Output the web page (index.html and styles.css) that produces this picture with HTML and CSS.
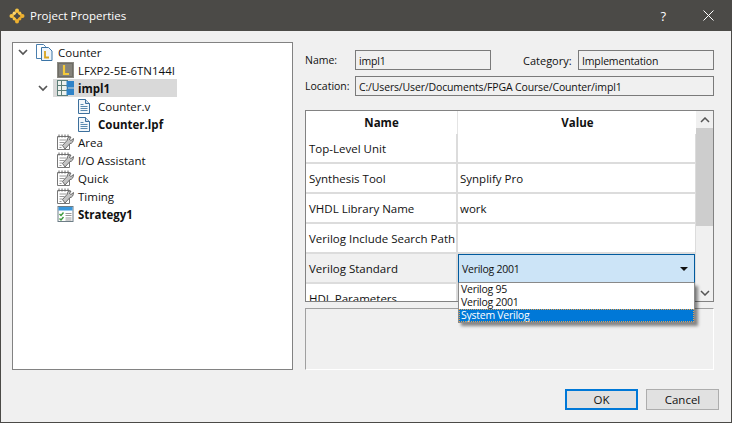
FILE: index.html

```html
<!DOCTYPE html>
<html lang="en">
<head>
  <meta charset="UTF-8" />
  <title>Project Properties</title>
  <link rel="stylesheet" href="styles.css">
</head>
<body>

  <svg class="defs" width="0" height="0">
    <symbol id="i-chev" viewBox="0 0 10 10"><path d="M1 3l4 4 4-4" fill="none" stroke="#555" stroke-width="1.7"/></symbol>
    <symbol id="i-project" viewBox="0 0 17 17">
      <path d="M0.500 0.500h7l2 2v12h-9z" fill="#fff" stroke="#4a7fae"/>
      <path d="M5.500 3.500h7l3.500 3.500v9.500h-10.500z" fill="#eef4fa" stroke="#3b74a6"/>
      <path d="M9 7v6.500h4" fill="none" stroke="#d9a520" stroke-width="1.800"/>
    </symbol>
    <symbol id="i-device" viewBox="0 0 17 16">
      <rect x="0.500" y="0.500" width="16" height="15" fill="#6f6d66" stroke="#8b8982"/>
      <rect x="2" y="2" width="13" height="12" fill="#85837b"/>
      <path d="M7 3v9h5" fill="none" stroke="#f3c93a" stroke-width="2.200"/>
    </symbol>
    <symbol id="i-impl" viewBox="0 0 17 16">
      <rect x="0.500" y="0.500" width="10" height="15" fill="#eef2ef" stroke="#5e7f78"/>
      <path d="M0.500 5.500h10M0.500 10.500h10M4.500 .5v15" stroke="#5e7f78" fill="none"/>
      <rect x="9.500" y="1" width="7.500" height="6.500" fill="#2f83c8"/>
      <rect x="9.500" y="8.500" width="7.500" height="6.500" fill="#2f83c8"/>
    </symbol>
    <symbol id="i-file" viewBox="0 0 12 15">
      <path d="M0.500 0.500h7l4 4v10h-11z" fill="#f2f7fb" stroke="#3c6f9c"/>
      <path d="M7.500 .5v4h4" fill="#c9dcec" stroke="#3c6f9c"/>
      <path d="M2.500 5.500h3M2.500 7.500h7M2.500 9.500h7M2.500 11.500h7" stroke="#5a8ab0" fill="none"/>
    </symbol>
    <symbol id="i-tool" viewBox="0 0 17 16">
      <path d="M0.500 2.500h12v13h-12z" fill="#fff" stroke="#777"/>
      <path d="M2 0.500v3M5 0.500v3M8 0.500v3M11 0.500v3" stroke="#666" fill="none"/>
      <path d="M2.500 6h7M2.500 8.500h5M2.500 11h3M2.500 13.500h2" stroke="#9a9a9a" fill="none"/>
      <path d="M16.500 4.500l-2.500 2-1.500-1 1.500-2.500c-2-.5-4 1-3.700 3.200L5.500 11.500l2.500 3.500 5-5.500c2 .2 3.500-2 3.500-5z" fill="#c4c4c4" stroke="#5f5f5f" stroke-width=".9"/>
    </symbol>
    <symbol id="i-strategy" viewBox="0 0 16 16">
      <rect x="0.500" y="0.500" width="15" height="15" fill="#fff" stroke="#6d7d86"/>
      <rect x="1" y="1" width="14" height="3.500" fill="#3a97dc"/>
      <path d="M2 8l1.500 1.500L6 6.500M2 12.500L3.500 14 6 11" fill="none" stroke="#3d9a3d" stroke-width="1.400"/>
      <path d="M8 7.500h6M8 9.500h6M8 12h6M8 14h6" stroke="#999" fill="none"/>
    </symbol>
  </svg>

  <div class="window">
    <div class="titlebar">
      <svg class="app-icon" viewBox="0 0 16 16" width="16" height="16">
        <path d="M8 3L13 8 8 13 3 8z" fill="none" stroke="#e8a92c" stroke-width="2"/>
        <circle cx="8" cy="2.500" r="2" fill="#f5c445"/>
        <circle cx="8" cy="13.500" r="2" fill="#eeb02f"/>
        <circle cx="2.500" cy="8" r="2" fill="#f5c445"/>
        <circle cx="13.500" cy="8" r="2" fill="#eeb02f"/>
        <circle cx="5.200" cy="5.200" r="1.600" fill="#fad675"/>
        <circle cx="10.800" cy="5.200" r="1.600" fill="#f5c445"/>
        <circle cx="5.200" cy="10.800" r="1.600" fill="#f5c445"/>
        <circle cx="10.800" cy="10.800" r="1.600" fill="#e8a92c"/>
      </svg>
      <span class="title">Project Properties</span>
      <span class="help">?</span>
      <svg class="close" viewBox="0 0 11 11" width="11" height="11"><path d="M.5 .5l10 10M10.500 .5l-10 10" stroke="#fff" fill="none"/></svg>
    </div>

    <div class="content">
      <div class="main">
        <div class="tree">
          <div class="node lv0"><svg class="chev"><use href="#i-chev"/></svg><svg class="ic-project"><use href="#i-project"/></svg><span>Counter</span></div>
          <div class="node lv1"><svg class="ic17"><use href="#i-device"/></svg><span>LFXP2-5E-6TN144I</span></div>
          <div class="node lv1 selected"><svg class="chev"><use href="#i-chev"/></svg><svg class="ic17"><use href="#i-impl"/></svg><span class="bold">impl1</span></div>
          <div class="node lv2"><svg class="ic12"><use href="#i-file"/></svg><span>Counter.v</span></div>
          <div class="node lv2"><svg class="ic12"><use href="#i-file"/></svg><span class="bold">Counter.lpf</span></div>
          <div class="node lv1"><svg class="ic17"><use href="#i-tool"/></svg><span>Area</span></div>
          <div class="node lv1"><svg class="ic17"><use href="#i-tool"/></svg><span>I/O Assistant</span></div>
          <div class="node lv1"><svg class="ic17"><use href="#i-tool"/></svg><span>Quick</span></div>
          <div class="node lv1"><svg class="ic17"><use href="#i-tool"/></svg><span>Timing</span></div>
          <div class="node lv1"><svg class="ic17"><use href="#i-strategy"/></svg><span class="bold">Strategy1</span></div>
        </div>

        <div class="side">
          <div class="field-row">
            <label class="lbl">Name:</label>
            <div class="field name-field">impl1</div>
            <label class="lbl cat-lbl">Category:</label>
            <div class="field cat-field">Implementation</div>
          </div>
          <div class="field-row">
            <label class="lbl">Location:</label>
            <div class="field loc-field">C:/Users/User/Documents/FPGA Course/Counter/impl1</div>
          </div>

          <div class="props">
            <div class="props-grid">
              <div class="th">Name</div><div class="th th-r">Value</div>
              <div class="td">Top-Level Unit</div><div class="td val"></div>
              <div class="td">Synthesis Tool</div><div class="td val">Synplify Pro</div>
              <div class="td">VHDL Library Name</div><div class="td val">work</div>
              <div class="td">Verilog Include Search Path</div><div class="td val"></div>
              <div class="td hl">Verilog Standard</div><div class="td val"></div>
              <div class="td">HDL Parameters</div><div class="td val"></div>
            </div>
            <div class="scrollbar">
              <svg class="arrow" viewBox="0 0 10 6" width="10" height="6"><path d="M1 5l4-4 4 4" fill="none" stroke="#555" stroke-width="1.500"/></svg>
              <div class="track"><div class="thumb"></div></div>
              <svg class="arrow" viewBox="0 0 10 6" width="10" height="6"><path d="M1 1l4 4 4-4" fill="none" stroke="#555" stroke-width="1.500"/></svg>
            </div>
            <div class="combo">
              <div class="combo-head"><span>Verilog 2001</span><span class="caret"></span></div>
              <div class="combo-list">
                <div class="opt">Verilog 95</div>
                <div class="opt">Verilog 2001</div>
                <div class="opt active">System Verilog</div>
              </div>
            </div>
          </div>

          <div class="desc"></div>
        </div>
      </div>

      <div class="buttons">
        <button class="btn primary">OK</button>
        <button class="btn">Cancel</button>
      </div>
    </div>
  </div>

</body>
</html>
```

FILE: styles.css

```css
* {
  box-sizing: border-box;
}
html, body {
  margin: 0;
  padding: 0;
}
body {
  width: 732px;
  height: 423px;
  overflow: hidden;
  font-family: "Open Sans", "Noto Sans", sans-serif;
  font-size: 11.5px;
  color: #111;
}
.defs {
  position: absolute;
}
.window {
  width: 732px;
  height: 423px;
  display: flex;
  flex-direction: column;
  background-color: #f0f0f0;
  border: 1px solid #4b4a47;
  border-top: none;
}
.titlebar {
  height: 31px;
  flex: none;
  display: flex;
  align-items: center;
  padding-left: 8px;
  background-color: #4b4a47;
  color: #fff;
}
.app-icon {
  flex: none;
}
.title {
  margin-left: 5px;
  font-size: 11.5px;
}
.help {
  margin-left: auto;
  font-size: 13px;
  margin-right: 37px;
}
.close {
  margin-right: 17px;
}
.content {
  flex: 1;
  display: flex;
  flex-direction: column;
  padding: 11px 12px 12px 11px;
}
.main {
  display: flex;
  gap: 12px;
}
.tree {
  width: 281px;
  height: 328px;
  flex: none;
  background-color: #fff;
  border: 1px solid #828282;
}
.node {
  height: 18px;
  display: flex;
  align-items: center;
  position: relative;
  white-space: nowrap;
}
.lv0 {
  padding-left: 23px;
}
.lv1 {
  padding-left: 44px;
}
.lv2 {
  padding-left: 65px;
}
.selected::before {
  content: "";
  position: absolute;
  left: 40px;
  top: 0;
  width: 124px;
  height: 18px;
  background-color: #d9d9d9;
}
.selected .ic17, .selected span {
  position: relative;
}
.chev {
  position: absolute;
  width: 10px;
  height: 10px;
  top: 4px;
}
.lv0 .chev {
  left: 5px;
}
.lv1 .chev {
  left: 25px;
}
.ic-project {
  width: 17px;
  height: 17px;
  margin-right: 5px;
  flex: none;
}
.ic17 {
  width: 17px;
  height: 16px;
  margin-right: 4px;
  flex: none;
}
.ic12 {
  width: 12px;
  height: 15px;
  margin-right: 8px;
  flex: none;
}
.bold {
  font-weight: 700;
}
.side {
  width: 409px;
  flex: none;
}
.field-row {
  display: flex;
  align-items: center;
  height: 20px;
  margin-top: 8px;
  margin-bottom: 6px;
}
.field-row + .field-row {
  margin-top: 0;
  margin-bottom: 14px;
}
.lbl {
  width: 50px;
  flex: none;
  font-size: 10.5px;
}
.cat-lbl {
  width: 55px;
  margin-left: 32px;
  font-size: 11px;
}
.field {
  height: 20px;
  padding-left: 3px;
  font-size: 10.5px;
  letter-spacing: -.15px;
  line-height: 20px;
  background-color: #f0f0f0;
  border: 1px solid #7a7a7a;
  white-space: nowrap;
  overflow: hidden;
}
.name-field, .cat-field {
  width: 136px;
}
.loc-field {
  width: 359px;
}
.props {
  position: relative;
  height: 192px;
  display: flex;
  background-color: #fff;
  border: 1px solid #828282;
}
.props-grid {
  width: 391px;
  height: 190px;
  overflow: hidden;
  display: grid;
  grid-template-columns: 152px 239px;
  grid-template-rows: 23px;
  grid-auto-rows: 30px;
}
.th {
  text-align: center;
  font-weight: 700;
  line-height: 24px;
  border-right: 1px solid #e4e4e4;
}
.th-r {
  border-right: none;
}
.td {
  display: flex;
  align-items: center;
  padding-left: 3px;
  white-space: nowrap;
  background-color: #fff;
  border-bottom: 2px solid #dcdcdc;
  border-right: 2px solid #dcdcdc;
}
.td.val {
  padding-left: 2px;
}
.hl {
  background-color: #f0f0f0;
}
.scrollbar {
  width: 17px;
  display: flex;
  flex-direction: column;
  align-items: center;
  margin-left: auto;
  background-color: #f0f0f0;
}
.arrow {
  flex: none;
  margin: 6px 0 5px;
}
.track {
  flex: 1;
  width: 100%;
}
.thumb {
  height: 98px;
  background-color: #cdcdcd;
}
.combo {
  position: absolute;
  left: 152px;
  top: 143px;
  width: 237px;
  font-size: 10.5px;
  letter-spacing: -.25px;
}
.combo-head {
  height: 29px;
  display: flex;
  align-items: center;
  justify-content: space-between;
  padding: 0 6px 0 3px;
  background-color: #cce4f7;
  border: 1px solid #005a9e;
  border-bottom-color: #8a8a8a;
}
.caret {
  width: 0;
  height: 0;
  border-left: 4px solid transparent;
  border-right: 4px solid transparent;
  border-top: 4px solid #111;
}
.combo-list {
  background-color: #fff;
  border: 1px solid #8a8a8a;
  border-top: none;
  box-shadow: 3px 3px 3px rgba(0, 0, 0, .45);
}
.opt {
  height: 13px;
  line-height: 13px;
  padding-left: 2px;
  white-space: nowrap;
}
.active {
  background-color: #0078d7;
  color: #fff;
  outline: 1px dotted #e9a04a;
  outline-offset: -1px;
}
.desc {
  height: 62px;
  margin-top: 6px;
  background-color: #f0f0f0;
  border: 1px solid #fff;
  border-top-color: #a0a0a0;
  border-left-color: #a0a0a0;
}
.buttons {
  display: flex;
  justify-content: flex-end;
  gap: 8px;
  margin-top: 19px;
}
.btn {
  width: 73px;
  height: 21px;
  padding: 0;
  font-family: inherit;
  font-size: 11.5px;
  color: #111;
  background-color: #e1e1e1;
  border: 1px solid #adadad;
}
.primary {
  border: 2px solid #0078d7;
}
```
